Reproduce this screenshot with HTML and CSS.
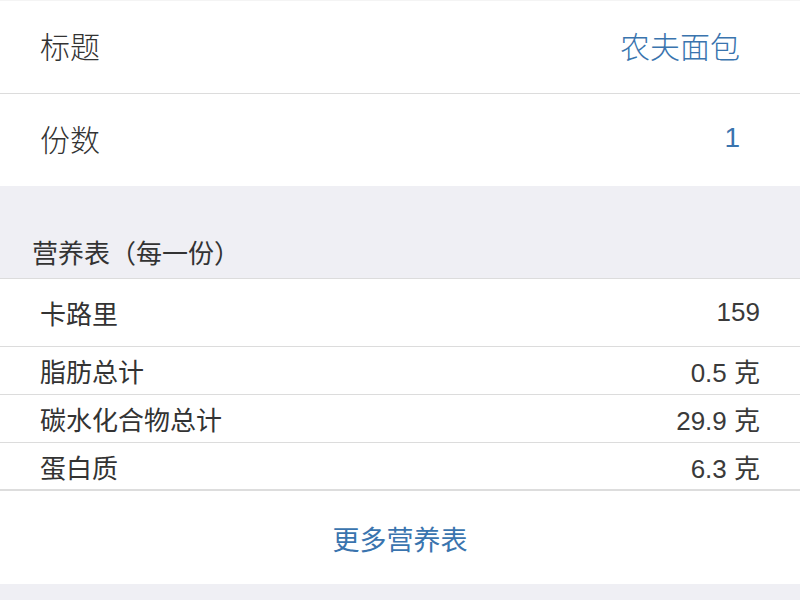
FILE: index.html
```html
<!DOCTYPE html>
<html lang="zh-CN">
<head>
<meta charset="utf-8">
<link rel="stylesheet" href="styles.css">
</head>
<body>
<div class="page">
  <div class="group top">
    <div class="row big"><span class="label">标题</span><span class="value">农夫面包</span></div>
    <div class="row big"><span class="label">份数</span><span class="value num-blue">1</span></div>
  </div>
  <div class="section-head">营养表（每一份）</div>
  <div class="group facts">
    <div class="row fact first"><span class="label">卡路里</span><span class="num">159</span></div>
    <div class="row fact"><span class="label">脂肪总计</span><span class="num">0.5 克</span></div>
    <div class="row fact"><span class="label">碳水化合物总计</span><span class="num">29.9 克</span></div>
    <div class="row fact last"><span class="label">蛋白质</span><span class="num">6.3 克</span></div>
  </div>
  <div class="more"><span class="link">更多营养表</span></div>
  <div class="footer"></div>
</div>
</body>
</html>
```
FILE: styles.css
```css
html, body {
  margin: 0;
  padding: 0;
  background: #efeff4;
}
body {
  font-family: "Noto Sans CJK SC", "Noto Sans", sans-serif;
  color: #333333;
  width: 800px;
  height: 600px;
  overflow: hidden;
}
.page {
  display: flex;
  flex-direction: column;
}
.group {
  background: #ffffff;
}
.top {
  border-top: 1px solid #f4f4f4;
}
.row {
  display: flex;
  align-items: center;
  justify-content: space-between;
  box-sizing: border-box;
}
.row.big {
  height: 92px;
  padding: 0 60px 0 40px;
  font-size: 30px;
  font-weight: 300;
}
.row.big .label,
.row.big .value {
  margin-top: -4px;
}
.row.big + .row.big {
  border-top: 1px solid #dcdcdc;
  height: 93px;
}
.value {
  color: #3a74ae;
}
.num-blue {
  font-family: "Liberation Sans", sans-serif;
  font-size: 28px;
}
.section-head {
  height: 93px;
  box-sizing: border-box;
  padding: 50px 0 0 32px;
  font-size: 26px;
  line-height: 32px;
  color: #333;
  border-bottom: 1px solid #dcdcdc;
}
.facts .row.fact {
  height: 48px;
  padding: 0 40px 0 40px;
  font-size: 26px;
  border-top: 1px solid #dcdcdc;
}
.facts .row.fact.first {
  height: 67px;
  border-top: none;
}
.facts .row.fact.last {
  height: 49px;
  border-bottom: 2px solid #dddddd;
}
.num {
  font-family: "Liberation Sans", "Noto Sans CJK SC", sans-serif;
  font-size: 26px;
  color: #3a3a3a;
}
.more {
  background: #ffffff;
  height: 93px;
  display: flex;
  align-items: center;
  justify-content: center;
  font-size: 27px;
}
.link {
  color: #3a74ae;
  padding-top: 2px;
}
.footer {
  height: 20px;
  background: #efeff4;
}
```
